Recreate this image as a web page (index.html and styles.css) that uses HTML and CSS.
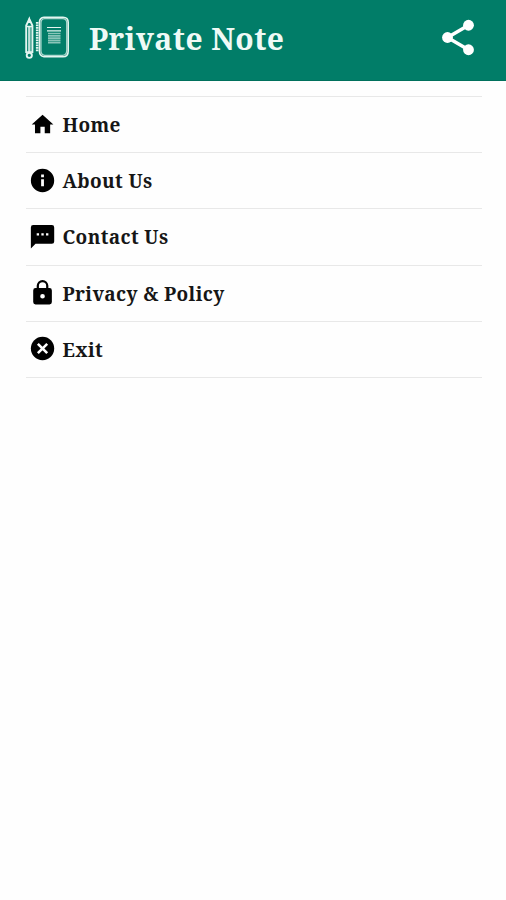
FILE: index.html
```html
<!DOCTYPE html>
<html lang="en">
<head>
<meta charset="utf-8">
<title>Private Note</title>
<link rel="stylesheet" href="styles.css">
</head>
<body>
<header class="bar">
  <svg class="logo" viewBox="0 0 46 46" fill="none" stroke="#e4f5f0">
    <path d="M2.200 38V10.500L5.300 4l3.100 6.500V38" stroke-width="1.900"/>
    <path d="M5.300 11v26" stroke-width="2.400" opacity=".85"/>
    <path d="M3.700 8 5.300 1l1.600 7z" fill="#e4f5f0" stroke="none"/>
    <path d="M2 11.500h6.600M2 37h6.600" stroke-width="1.300"/>
    <circle cx="5.300" cy="40.300" r="2.600" stroke-width="1.900"/>
    <path d="M13.200 7v30" stroke-width="2.600" stroke-dasharray="1.800 .7"/>
    <path d="M15.500 8v28" stroke-width="1"/>
    <path d="M20 2.200h19q5.200 0 5.200 5.200v28.600q0 5.800-5.200 5.800H20q-4.500-1-4.500-5V7q0-4.300 4.500-4.800z" stroke-width="1.600"/>
    <path d="M20.500 3.600h18q4.200 0 4.200 4.200v27.500q0 5-4.200 5h-18Q17 39.500 17 36V8q0-4 3.500-4.400z" stroke-width="1.200" opacity=".75"/>
    <path d="M23 12.500h14M23 15.800h14" stroke-width="1.200"/>
    <path d="M24 18.500h12.500M24 20.800h12.500M24 23.100h12.500M24 25.400h12.500M24 27.700h12.500" stroke-width="1.700" opacity=".6"/>
  </svg>
  <h1 class="title">Private Note</h1>
  <svg class="share" viewBox="0 .3 24 24" fill="#fff" stroke="#fff">
    <path d="M18 5 6 12l12 7" fill="none" stroke-width="2"/>
    <g stroke="none"><circle cx="18" cy="5" r="3.100"/><circle cx="6" cy="12" r="3.100"/><circle cx="18" cy="19" r="3.100"/></g>
  </svg>
</header>
<nav class="menu">
  <a class="item"><svg class="icon small" viewBox=".4 .4 24 24"><path d="M10 20v-6h4v6h5v-8h3L12 3 2 12h3v8z"/></svg><span>Home</span></a>
  <a class="item"><svg class="icon" viewBox=".4 .4 24 24"><path d="M12 2a10 10 0 1 0 0 20 10 10 0 0 0 0-20zm1.200 15h-2.400v-6h2.400zm0-7.800h-2.400V6.800h2.400z"/></svg><span>About Us</span></a>
  <a class="item"><svg class="icon" viewBox=".4 .2 24 24"><path d="M20 2H4a2 2 0 0 0-2 2v18l4-4h14a2 2 0 0 0 2-2V4a2 2 0 0 0-2-2zM9 11H7V9h2zm4 0h-2V9h2zm4 0h-2V9h2z"/></svg><span>Contact Us</span></a>
  <a class="item"><svg class="icon" viewBox=".4 .2 24 24"><path d="M18 8h-1V6A5 5 0 0 0 7 6v2H6a2 2 0 0 0-2 2v10a2 2 0 0 0 2 2h12a2 2 0 0 0 2-2V10a2 2 0 0 0-2-2zm-6 9a2 2 0 1 1 0-4 2 2 0 0 1 0 4zm3.100-9H8.900V6a3.100 3.100 0 0 1 6.200 0z"/></svg><span>Privacy &amp; Policy</span></a>
  <a class="item"><svg class="icon" viewBox=".4 .4 24 24"><circle cx="12" cy="12" r="10"/><path class="cross" d="m8 8 8 8m0-8-8 8"/></svg><span>Exit</span></a>
</nav>
</body>
</html>
```
FILE: styles.css
```css
* { box-sizing: border-box; }
body {
  margin: 0;
  min-height: 900px;
  background: #fefefe;
  font-family: "Noto Serif", "Droid Serif", "DejaVu Serif Condensed", "DejaVu Serif", serif;
}
.bar {
  display: flex;
  align-items: center;
  height: 81px;
  padding: 0 27px 4px 24px;
  background: #017d68;
  border-bottom: 1px solid #00705c;
}
.logo { width: 46px; height: 46px; }
.title {
  flex: 1;
  margin: 1px 0 0 19px;
  color: #effaf6;
  font-size: 30px;
  line-height: 40px;
  font-weight: 700;
  letter-spacing: .45px;
  white-space: nowrap;
}
.share { width: 42px; height: 42px; }
.menu {
  margin: 15px 24px 0 26px;
  border-top: 1px solid #e8e8e8;
}
.item {
  display: flex;
  align-items: center;
  height: 56.200px;
  padding-left: 3px;
  border-bottom: 1px solid #e8e8e8;
  color: #161616;
  font-size: 19px;
  font-weight: 700;
  letter-spacing: .38px;
  white-space: nowrap;
}
.item span { padding-top: 1px; }
.icon { width: 28px; height: 28px; margin-right: 5.500px; fill: #000; }
.icon.small { width: 26px; height: 26px; margin: 0 6.500px 0 1px; }
.cross { stroke: #fff; stroke-width: 2.200; }
```
